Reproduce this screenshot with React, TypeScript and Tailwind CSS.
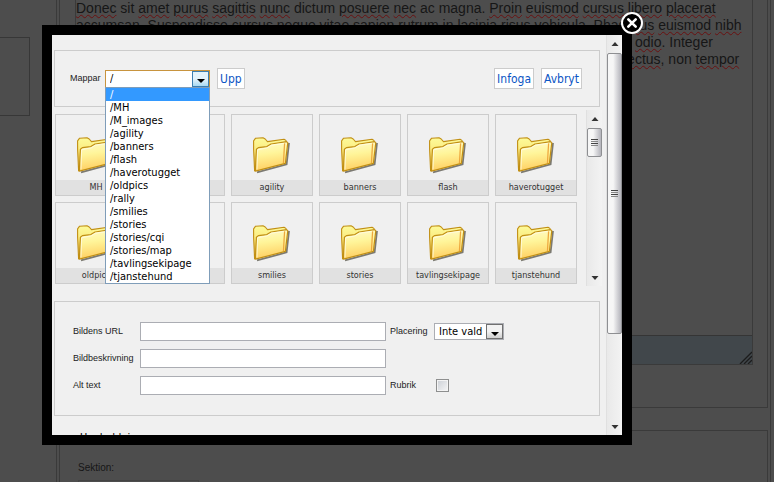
import React, { useState } from 'react';

const folderNames = [
  'MH', 'M_images', 'agility', 'banners', 'flash', 'haverotugget',
  'oldpics', 'rally', 'smilies', 'stories', 'tavlingsekipage', 'tjanstehund',
];

const paths = [
  '/', '/MH', '/M_images', '/agility', '/banners', '/flash', '/haverotugget', '/oldpics',
  '/rally', '/smilies', '/stories', '/stories/cqi', '/stories/map', '/tavlingsekipage', '/tjanstehund',
];

const knownWords = ['sit', 'dictum', 'ac', 'magna.', 'Integer', 'non', 'in'];

// Editor text with the browser's spell check marks
function Spelled({ text }: { text: string }) {
  return (
    <>
      {text.split(' ').map((word, i) => {
        const tail = /[.,]$/.test(word) ? word.slice(-1) : '';
        const body = tail ? word.slice(0, -1) : word;
        return (
          <React.Fragment key={i}>
            {i > 0 && ' '}
            {knownWords.includes(word) ? (
              word
            ) : (
              <>
                <span className="underline decoration-wavy decoration-1 decoration-[#6a1010] underline-offset-1">{body}</span>
                {tail}
              </>
            )}
          </React.Fragment>
        );
      })}
    </>
  );
}

function FolderIcon() {
  return (
    <svg viewBox="0 0 38 38" className="w-[38px] h-[38px]" aria-hidden="true">
      <defs>
        <linearGradient id="folderFront" x1="0" y1="0" x2="0.15" y2="1">
          <stop offset="0" stopColor="#fffbd0" />
          <stop offset="0.45" stopColor="#fff59a" />
          <stop offset="1" stopColor="#ffcf62" />
        </linearGradient>
        <linearGradient id="folderBack" x1="0" y1="0" x2="0" y2="1">
          <stop offset="0" stopColor="#fdfb9a" />
          <stop offset="0.4" stopColor="#fbea7e" />
          <stop offset="1" stopColor="#d9a01c" />
        </linearGradient>
      </defs>
      <path d="M4 35.4 L33.6 27.4 L36 6" fill="none" stroke="#5f5d52" strokeWidth="1.8" opacity="0.8" />
      <path
        d="M1.6 34 L0.6 12 V3.8 L2.6 1.2 L10 0.8 L12.2 2 L14.5 4.6 L31 2.2 L33 3.4 L33 8 L5 14 Z"
        fill="url(#folderBack)"
        stroke="#c18f14"
        strokeWidth="1.1"
        strokeLinejoin="round"
      />
      <path
        d="M2.4 34.2 L3.4 12.2 L5.4 10.6 L13.8 9.6 L18 7 L33.6 4.6 L34.8 5.6 L32.4 26.4 Z"
        fill="url(#folderFront)"
        stroke="#c18f14"
        strokeWidth="1.2"
        strokeLinejoin="round"
      />
      <path d="M31.6 6.4 L30.4 26" stroke="#eda63c" strokeWidth="1.2" fill="none" />
      <path d="M4 32.4 L4.6 12.8 L14.2 10.8 L18.4 8.2 L30.6 6.4" stroke="#fffde6" strokeWidth="0.8" fill="none" />
    </svg>
  );
}

function Arrow({ up }: { up?: boolean }) {
  return (
    <svg viewBox="0 0 8 4" className="w-2 h-1" aria-hidden="true">
      <path d={up ? 'M4 0 L7.5 4 H0.5 Z' : 'M0.5 0 H7.5 L4 4 Z'} fill="#333" />
    </svg>
  );
}

function Grip() {
  return (
    <div className="flex flex-col gap-px">
      <i className="block w-[7px] h-px bg-[#444]" />
      <i className="block w-[7px] h-px bg-[#888]" />
      <i className="block w-[7px] h-px bg-[#444]" />
      <i className="block w-[7px] h-px bg-[#888]" />
    </div>
  );
}

function Scrollbar({ thumbClass }: { thumbClass: string }) {
  return (
    <div className="w-4 shrink-0 flex flex-col items-center border-l border-[#e0e0e0] bg-linear-to-r from-[#e9e9e9] to-[#f3f3f3]">
      <div className="h-[18px] flex items-center justify-center">
        <Arrow up />
      </div>
      <div
        className={`w-[15px] flex items-center justify-center rounded-xs border border-[#8e8f92] bg-linear-to-r from-[#f6f6f6] from-40% to-[#b4b4bb] ${thumbClass}`}
      >
        <Grip />
      </div>
      <div className="mt-auto h-4 flex items-center justify-center">
        <Arrow />
      </div>
    </div>
  );
}

function LinkButton({ children }: { children: React.ReactNode }) {
  return (
    <button type="button" className="h-[21px] px-[2px] bg-white border border-[#ccc] text-[12px] leading-4 text-[#0b55c4]">
      {children}
    </button>
  );
}

function TextRow({ id, label }: { id: string; label: string }) {
  return (
    <>
      <label htmlFor={id}>{label}</label>
      <input id={id} type="text" className="w-full h-[19px] px-1 bg-white border border-[#abadb3] text-[12px] outline-none" />
    </>
  );
}

function ImageDialog({ onClose }: { onClose: () => void }) {
  const [path, setPath] = useState('/');

  return (
    <div
      role="dialog"
      aria-label="Infoga bild"
      className="absolute left-[42px] right-[142px] top-[25px] h-[420px] border-[10px] border-black bg-[#f0f0f0] flex font-['DejaVu_Sans_Condensed','DejaVu_Sans',sans-serif] text-black"
    >
      <div className="flex-1 min-w-0 overflow-hidden pt-[15px] pl-[2px]">
        <div className="mr-[6px] h-[57px] border border-[#ccc] pl-[15px] pr-[17px] flex items-center">
          <label htmlFor="folders" className="w-[35px] font-['Liberation_Sans',sans-serif] text-[9px] text-[#222]">
            Mappar
          </label>
          <div className="relative w-[105px]">
            <select
              id="folders"
              value={path}
              onChange={(e) => setPath(e.target.value)}
              className="block appearance-none w-full h-[18px] pl-1 bg-white border border-[#c8943e] text-[11px] leading-4 outline-none"
            >
              {paths.map((p) => (
                <option key={p}>{p}</option>
              ))}
            </select>
            <span className="pointer-events-none absolute right-px top-px w-[17px] h-4 border border-[#3c7fb1] bg-linear-to-b from-[#e3f3fb] from-50% to-[#a9daf2] flex items-end justify-center pb-[3px]">
              <svg viewBox="0 0 8 4" className="w-2 h-1" aria-hidden="true">
                <path d="M0 0 H8 L4 4 Z" fill="#000" />
              </svg>
            </span>
            <ul className="absolute z-10 left-0 top-[17px] w-[105px] border border-[#7f9db9] bg-white text-[11px] leading-[13px]">
              {paths.map((p) => (
                <li
                  key={p}
                  onClick={() => setPath(p)}
                  className={p === path ? 'pl-1 bg-[#3399ff] text-white' : 'pl-1'}
                >
                  {p}
                </li>
              ))}
            </ul>
          </div>
          <div className="ml-[7px] flex-1 flex gap-[7px]">
            <LinkButton>Upp</LinkButton>
            <div className="ml-auto" />
            <LinkButton>Infoga</LinkButton>
            <LinkButton>Avbryt</LinkButton>
          </div>
        </div>

        <div className="mt-[3px] mr-1 h-[176px] flex overflow-hidden">
          <div className="flex-1 pt-1 pl-px flex flex-wrap content-start gap-[6px]">
            {folderNames.map((name) => (
              <a
                key={name}
                href="#"
                className="w-[82px] h-[82px] border border-[#ccc] flex flex-col items-center justify-end"
              >
                <FolderIcon />
                <span className="mt-[5px] w-full h-[15px] bg-[#e1e1e1] text-center text-[9px] leading-[15px] text-[#333]">
                  {name}
                </span>
              </a>
            ))}
          </div>
          <Scrollbar thumbClass="h-[29px]" />
        </div>

        <div className="mt-[15px] mr-[6px] h-[115px] border border-[#ccc] pt-5 pl-[18px] flex items-start gap-1 font-['Liberation_Sans',sans-serif] text-[9px] text-[#222]">
          <div className="grid grid-cols-[67px_246px] gap-y-2 leading-[19px]">
            <TextRow id="url" label="Bildens URL" />
            <TextRow id="desc" label="Bildbeskrivning" />
            <TextRow id="alt" label="Alt text" />
          </div>
          <div className="grid grid-cols-[44px_70px] gap-y-[35px] items-center leading-[19px]">
            <label htmlFor="placement">Placering</label>
            <div className="relative">
              <select
                id="placement"
                className="block appearance-none w-full h-[17px] pl-1 bg-white border border-[#abadb3] text-[11px] leading-[15px] text-black font-['DejaVu_Sans_Condensed','DejaVu_Sans',sans-serif] outline-none"
              >
                <option>Inte vald</option>
              </select>
              <span className="pointer-events-none absolute right-px top-px w-[17px] h-[15px] border border-[#707070] bg-linear-to-b from-[#f2f2f2] from-50% to-[#cfcfcf] flex items-end justify-center pb-[2px]">
                <svg viewBox="0 0 8 4" className="w-2 h-1" aria-hidden="true">
                  <path d="M0 0 H8 L4 4 Z" fill="#000" />
                </svg>
              </span>
            </div>
            <label htmlFor="heading">Rubrik</label>
            <input
              id="heading"
              type="checkbox"
              className="appearance-none ml-[2px] w-[13px] h-[13px] border border-[#8e8f8f] bg-linear-to-br from-[#cbcfd5] to-[#f6f6f6] shadow-[inset_0_0_0_1px_#f4f4f4]"
            />
          </div>
        </div>

        <fieldset className="mt-[15px] mr-[6px] border border-[#ccc] px-[21px] pb-5">
          <legend className="px-1 text-[11px] leading-[14px] text-black">Uppladdning</legend>
        </fieldset>
      </div>

      <Scrollbar thumbClass="h-[281px]" />

      <button type="button" aria-label="Stäng" onClick={onClose} className="absolute -right-[22px] -top-6 w-6 h-6">
        <svg viewBox="0 0 24 24" className="w-6 h-6" aria-hidden="true">
          <circle cx="12" cy="12" r="10" fill="#000" stroke="#fff" strokeWidth="2" />
          <path d="M8.3 8.3 L15.7 15.7 M15.7 8.3 L8.3 15.7" stroke="#fff" strokeWidth="2.6" strokeLinecap="round" />
        </svg>
      </button>
    </div>
  );
}

export default function App() {
  const [open, setOpen] = useState(true);

  return (
    <div className="relative min-h-screen overflow-hidden bg-[#4d4d4d] flex font-['Liberation_Sans',sans-serif] text-[#161616]">
      <aside className="w-14 shrink-0">
        <div className="mt-[37px] w-[30px] h-[79px] border border-l-0 border-[#373737]" />
      </aside>

      <main className="flex-1 min-w-0 h-screen overflow-hidden mr-[3px] px-[2px] border-x border-[#3a3a3a]">
        <section className="border border-t-0 border-[#3a3a3a] pl-[15px] pr-[14px] pb-[42px]">
          <div className="border border-t-0 border-[#3a3a3a]">
            <div className="h-[335px] text-[14px] leading-[17px] whitespace-nowrap">
              <p><Spelled text="Donec sit amet purus sagittis nunc dictum posuere nec ac magna. Proin euismod cursus libero placerat" /></p>
              <p><Spelled text="accumsan. Suspendisse cursus neque vitae sapien rutrum in lacinia risus vehicula. Phasellus euismod nibh" /></p>
              <p className="pl-[559px]"><Spelled text="odio. Integer" /></p>
              <p className="pl-[548px]"><Spelled text="lectus, non tempor" /></p>
            </div>
            <div className="h-[29px] border-t border-[#353535] bg-[#41474b] flex items-end justify-end">
              <svg viewBox="0 0 13 13" className="w-[13px] h-[13px]" aria-hidden="true">
                <path d="M1 13 L13 1 M5 13 L13 5 M9 13 L13 9" stroke="#1c1c1c" strokeWidth="1.3" />
              </svg>
            </div>
          </div>
        </section>

        <section className="mt-[22px] border border-[#3a3a3a] h-[80px] pl-[18px] pt-[30px] text-[10px] leading-[14px]">
          <label htmlFor="section">Sektion:</label>
          <select id="section" className="block appearance-none mt-[5px] w-[121px] h-5 border border-[#444]" />
        </section>
      </main>

      {open && <ImageDialog onClose={() => setOpen(false)} />}
    </div>
  );
}
